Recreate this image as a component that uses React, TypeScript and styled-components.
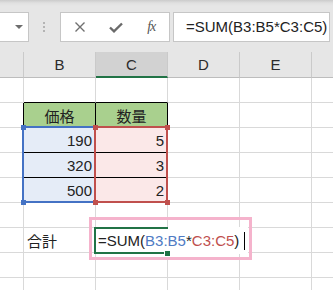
import React from 'react';
import styled, { createGlobalStyle } from 'styled-components';

const GlobalStyle = createGlobalStyle`
    html, body {
        margin: 0;
        padding: 0;
        background: #fff;
    }
    body {
        font-family: "Liberation Sans", "Noto Sans CJK JP", sans-serif;
    }
`;

const COLS = '24px repeat(5, 72px) 1fr';
const GRID = '#d9d9d9';
const BLUE = '#4472c4';
const RED = '#c0504d';
const GREEN = '#217346';

/**
 * 画面全体
 */
const Screen = styled.div`
    position: relative;
    width: 333px;
    height: 290px;
    overflow: hidden;
    background: #fff;
    color: #222;
    font-size: 15px;
`;

/**
 * 数式バー
 */
const FormulaBar = styled.div`
    display: flex;
    align-items: flex-start;
    height: 52px;
    padding-top: 12px;
    box-sizing: border-box;
    background: linear-gradient(#cbcbcb 0, #e0e0e0 3px, #e6e6e6 6px);
`;

const NameBox = styled.div`
    display: flex;
    align-items: center;
    justify-content: flex-end;
    width: 29px;
    height: 30px;
    padding-right: 5px;
    box-sizing: border-box;
    background: #fff;
    border: 1px solid #c6c6c6;
    border-left: none;
`;

const DropArrow = styled.span`
    width: 0;
    height: 0;
    border-left: 4px solid transparent;
    border-right: 4px solid transparent;
    border-top: 4px solid #6d6d6d;
`;

const Grip = styled.div`
    display: flex;
    flex-direction: column;
    gap: 2px;
    margin: 10px 0 0 14px;
    span {
        width: 2px;
        height: 2px;
        background: #b4b4b4;
    }
`;

const ButtonBox = styled.div`
    display: flex;
    width: 110px;
    height: 30px;
    margin-left: 15px;
    padding-left: 1px;
    box-sizing: border-box;
    background: #fff;
    border: 1px solid #c6c6c6;
`;

const BarButton = styled.div`
    display: flex;
    align-items: center;
    justify-content: center;
    width: 36px;
    height: 100%;
    color: #6a6a6a;
`;

const FxLabel = styled.span`
    font-family: "Liberation Serif", serif;
    font-style: italic;
    font-size: 14px;
    color: #555;
    letter-spacing: -1px;
`;

const FormulaInput = styled.div`
    width: 157px;
    height: 30px;
    margin-left: 3px;
    padding-left: 12px;
    box-sizing: border-box;
    background: #fff;
    border: 1px solid #c6c6c6;
    font-size: 15px;
    line-height: 28px;
    white-space: nowrap;
    overflow: hidden;
    color: #222;
`;

/**
 * 列見出し
 */
const HeaderRow = styled.div`
    display: grid;
    grid-template-columns: ${COLS};
    height: 26px;
    background: #e6e6e6;
`;

const HeaderCell = styled.div<{ $active?: boolean }>`
    display: flex;
    align-items: center;
    justify-content: center;
    box-sizing: border-box;
    border-right: 1px solid #cacaca;
    border-bottom: ${(p) => (p.$active ? `2px solid ${GREEN}` : '1px solid #bdbdbd')};
    background: ${(p) => (p.$active ? '#d2d2d2' : 'transparent')};
    color: #2b2b2b;
    font-size: 15px;
    padding-top: ${(p) => (p.$active ? '1px' : '0')};
`;

/**
 * シート本体
 */
const Sheet = styled.div`
    position: relative;
`;

const Row = styled.div`
    display: grid;
    grid-template-columns: ${COLS};
    height: 25px;
`;

const Cell = styled.div<{ $fill?: string; $align?: string; $right?: string; $bottom?: string }>`
    display: flex;
    align-items: center;
    justify-content: ${(p) => p.$align || 'flex-start'};
    padding: 1px 3px 0;
    box-sizing: border-box;
    background: ${(p) => p.$fill || '#fff'};
    border-right: 1px solid ${(p) => p.$right || GRID};
    border-bottom: 1px solid ${(p) => p.$bottom || GRID};
    font-size: 15px;
    white-space: nowrap;
`;

const RangeBox = styled.div<{ $color: string; $left: number }>`
    position: absolute;
    left: ${(p) => p.$left}px;
    top: 48px;
    width: 74px;
    height: 77px;
    box-sizing: border-box;
    border: 2px solid ${(p) => p.$color};
`;

const Handle = styled.div<{ $color: string; $x: number; $y: number }>`
    position: absolute;
    left: ${(p) => p.$x}px;
    top: ${(p) => p.$y}px;
    width: 5px;
    height: 5px;
    background: ${(p) => p.$color};
`;

const EditBox = styled.div`
    position: absolute;
    left: 94px;
    top: 149px;
    width: 154px;
    height: 27px;
    box-sizing: border-box;
    padding-left: 4px;
    display: flex;
    align-items: center;
    background: #fff;
    font-size: 15px;
    white-space: nowrap;
    &::before {
        content: '';
        position: absolute;
        left: 0;
        top: 0;
        width: 74px;
        height: 27px;
        box-sizing: border-box;
        border: 2px solid ${GREEN};
        border-right: none;
    }
`;

const Ref = styled.span<{ $color?: string }>`
    color: ${(p) => p.$color || '#222'};
`;

const Caret = styled.span`
    display: inline-block;
    width: 1px;
    height: 18px;
    margin-left: 5px;
    background: #000;
`;

const FillHandle = styled.div`
    position: absolute;
    left: 164px;
    top: 172px;
    width: 5px;
    height: 5px;
    border: 1px solid #fff;
    background: ${GREEN};
`;

const Callout = styled.div`
    position: absolute;
    left: 89px;
    top: 139px;
    width: 163px;
    height: 43px;
    box-sizing: border-box;
    border: 3px solid #f5b3cc;
`;

type CellData = { text?: string; fill?: string; align?: string; right?: string; bottom?: string };

const TBL = '#000';
const LBLUE = '#e5ecf7';
const LPINK = '#fbe8e8';

const dataRow = (a: string, b: string): CellData[] => [
    { right: TBL },
    { text: a, fill: LBLUE, align: 'flex-end', right: TBL, bottom: TBL },
    { text: b, fill: LPINK, align: 'flex-end', right: TBL, bottom: TBL },
];

const rows: CellData[][] = [
    [{}, { bottom: TBL }, { bottom: TBL }],
    [
        { right: TBL },
        { text: '価格', fill: '#a9d08e', align: 'center', right: TBL, bottom: TBL },
        { text: '数量', fill: '#a9d08e', align: 'center', right: TBL, bottom: TBL },
    ],
    dataRow('190', '5'),
    dataRow('320', '3'),
    dataRow('500', '2'),
    [],
    [{}, { text: '合計' }],
    [],
    [],
];

const Formula = () => (
    <>
        =SUM(<Ref $color="#4f7bc4">B3:B5</Ref>*<Ref $color="#c0504d">C3:C5</Ref>)
    </>
);

const App = () => {
    return (
        <Screen>
            <GlobalStyle />
            <FormulaBar>
                <NameBox>
                    <DropArrow />
                </NameBox>
                <Grip>
                    <span />
                    <span />
                    <span />
                </Grip>
                <ButtonBox>
                    <BarButton>
                        <svg width="12" height="12" viewBox="0 0 12 12">
                            <path d="M1.5 1.5 L10.5 10.5 M10.5 1.5 L1.5 10.5" stroke="#707070" strokeWidth="1.4" />
                        </svg>
                    </BarButton>
                    <BarButton>
                        <svg width="14" height="11" viewBox="0 0 14 11">
                            <path d="M1 5.5 L5 9.3 L13 1.5" stroke="#6a6a6a" strokeWidth="2.4" fill="none" />
                        </svg>
                    </BarButton>
                    <BarButton>
                        <FxLabel>fx</FxLabel>
                    </BarButton>
                </ButtonBox>
                <FormulaInput>=SUM(B3:B5*C3:C5)</FormulaInput>
            </FormulaBar>
            <HeaderRow>
                <HeaderCell />
                <HeaderCell>B</HeaderCell>
                <HeaderCell $active>C</HeaderCell>
                <HeaderCell>D</HeaderCell>
                <HeaderCell>E</HeaderCell>
                <HeaderCell />
                <HeaderCell />
            </HeaderRow>
            <Sheet>
                {rows.map((cells, r) => (
                    <Row key={r}>
                        {Array.from({ length: 7 }).map((_, c) => {
                            const d = cells[c] || {};
                            return (
                                <Cell key={c} $fill={d.fill} $align={d.align} $right={d.right} $bottom={d.bottom}>
                                    {d.text}
                                </Cell>
                            );
                        })}
                    </Row>
                ))}
                <RangeBox $color={BLUE} $left={22} />
                <RangeBox $color={RED} $left={94} />
                <Handle $color={BLUE} $x={21} $y={47} />
                <Handle $color={BLUE} $x={21} $y={122} />
                <Handle $color={RED} $x={93} $y={47} />
                <Handle $color={RED} $x={93} $y={122} />
                <Handle $color={RED} $x={165} $y={47} />
                <Handle $color={RED} $x={165} $y={122} />
                <EditBox>
                    <Formula />
                    <Caret />
                </EditBox>
                <FillHandle />
                <Callout />
            </Sheet>
        </Screen>
    );
};

export default App;
